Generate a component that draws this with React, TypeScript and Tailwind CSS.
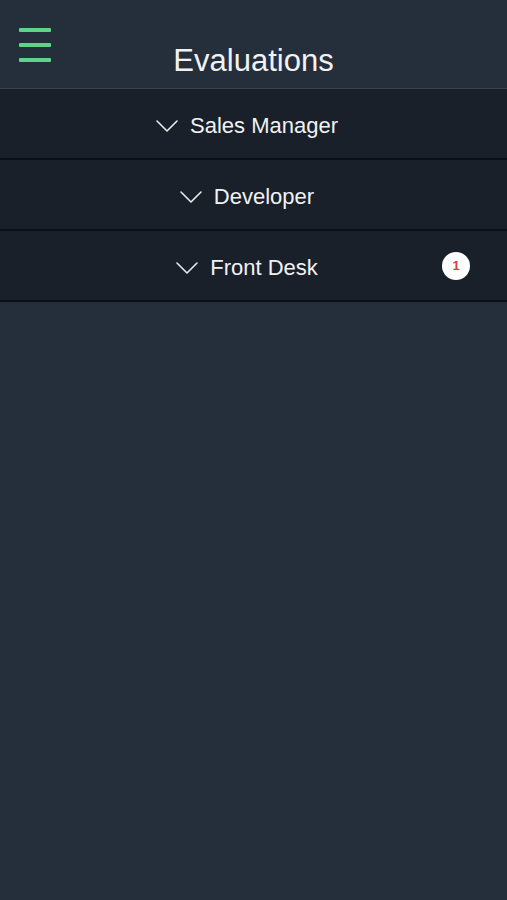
import React from "react";

const roles = [
  { name: "Sales Manager", badge: 0 },
  { name: "Developer", badge: 0 },
  { name: "Front Desk", badge: 1 },
];

function Chevron() {
  return (
    <svg width="22" height="12" viewBox="0 0 22 12" fill="none" className="shrink-0">
      <polyline points="1,1 11,11 21,1" stroke="#e8eaed" strokeWidth="1.6" strokeLinecap="round" strokeLinejoin="round" />
    </svg>
  );
}

export default function App() {
  return (
    <div
      className="min-h-[900px] w-full bg-[#252f3b] text-[#f1f2f4]"
      style={{ fontFamily: '"Liberation Sans", Arial, sans-serif' }}
    >
      {/* Header */}
      <header className="grid h-[89px] grid-cols-[1fr_auto_1fr] items-start border-b border-[#3b4552] pt-[28px]">
        <button className="flex flex-col gap-[11px] justify-self-start pl-[19px]">
          <span className="block h-[4px] w-[32px] rounded-[1px] bg-[#5ed48b]" />
          <span className="block h-[4px] w-[32px] rounded-[1px] bg-[#5ed48b]" />
          <span className="block h-[4px] w-[32px] rounded-[1px] bg-[#5ed48b]" />
        </button>
        <h1 className="mt-[15px] text-[31px] leading-[36px] font-normal">Evaluations</h1>
        <div />
      </header>

      {/* Role list */}
      <ul>
        {roles.map((r) => (
          <li
            key={r.name}
            className="relative flex h-[71px] items-center justify-center gap-[12px] border-b-2 border-[#0c1015] bg-[#19202a] pt-[4px] pr-[13px]"
          >
            <Chevron />
            <span className="text-[22px] leading-none">{r.name}</span>
            {r.badge > 0 && (
              <span className="absolute right-[37px] top-1/2 flex h-[28px] w-[28px] -translate-y-1/2 items-center justify-center rounded-full bg-white text-[13px] font-semibold text-[#dc3f3f]">
                {r.badge}
              </span>
            )}
          </li>
        ))}
      </ul>
    </div>
  );
}
